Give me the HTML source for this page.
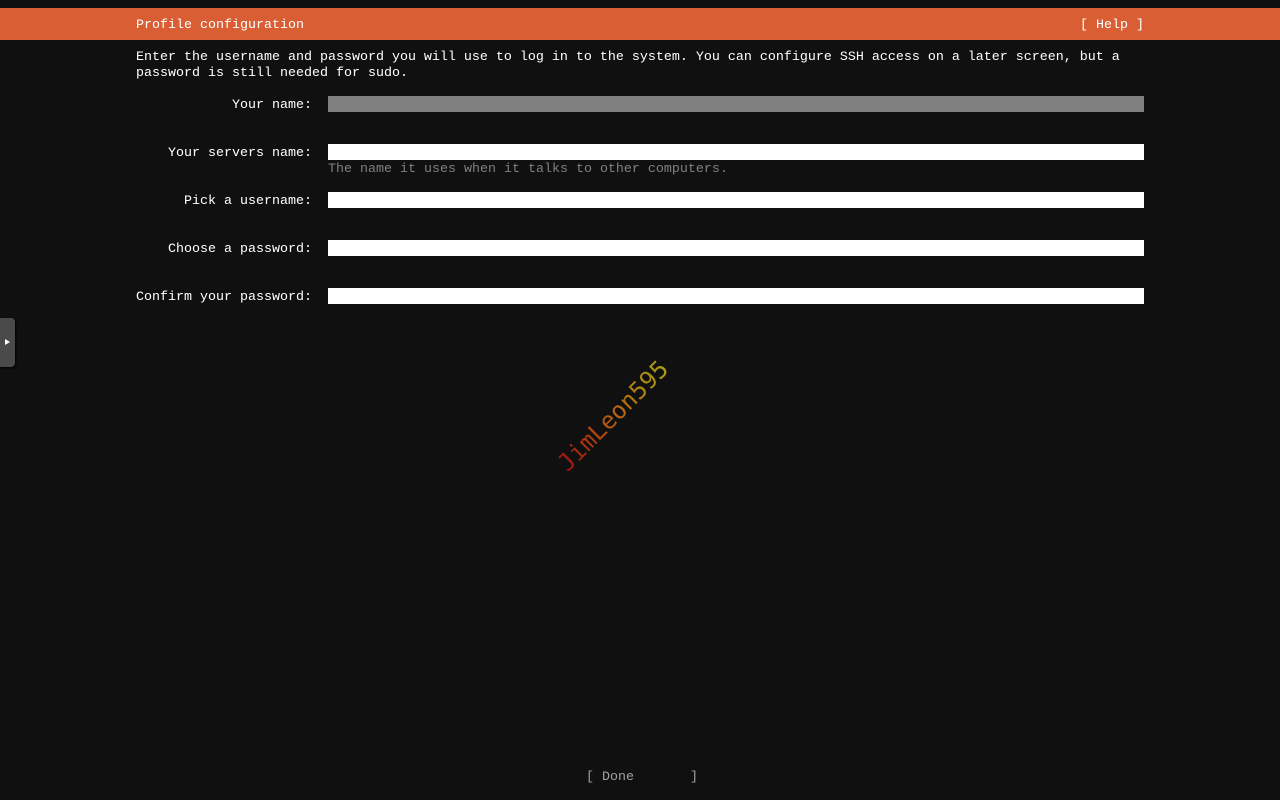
<!DOCTYPE html>
<html><head><style>
body{margin:0;width:1280px;height:800px;background:#101010;overflow:hidden;font-family:"Liberation Mono",monospace;font-size:13.33px;line-height:16px;color:#fff;position:relative}
.t{position:absolute;white-space:pre}
.bar{position:absolute;left:0;top:8px;width:1280px;height:32px;background:#d95e33}
.lab{position:absolute;right:968px;white-space:pre}
.f{position:absolute;left:328px;width:816px;height:16px;background:#fff}
</style></head><body>
<div class="bar"></div>
<div class="t" style="left:136px;top:18px">Profile configuration</div>
<div class="t" style="left:1080px;top:18px">[ Help ]</div>
<div class="t" style="left:136px;top:50px">Enter the username and password you will use to log in to the system. You can configure SSH access on a later screen, but a
password is still needed for sudo.</div>
<div class="lab" style="top:98px">Your name:</div><div class="f" style="top:96px;background:#808080"></div>
<div class="lab" style="top:146px">Your servers name:</div><div class="f" style="top:144px"></div>
<div class="t" style="left:328px;top:162px;color:#808080">The name it uses when it talks to other computers.</div>
<div class="lab" style="top:194px">Pick a username:</div><div class="f" style="top:192px"></div>
<div class="lab" style="top:242px">Choose a password:</div><div class="f" style="top:240px"></div>
<div class="lab" style="top:290px">Confirm your password:</div><div class="f" style="top:288px"></div>
<div style="position:absolute;left:-6px;top:318px;width:21px;height:49px;background:#4a4a4a;border-radius:4px;box-shadow:1px 1px 2px #000"></div>
<div style="position:absolute;left:5px;top:339px;width:0;height:0;border-left:5px solid #fff;border-top:3px solid transparent;border-bottom:3px solid transparent"></div>
<div class="t" style="left:562px;top:454px;font-size:24px;line-height:26px;transform:rotate(-45deg);transform-origin:left center;background:linear-gradient(90deg,#a01010,#b86010,#a8a010);-webkit-background-clip:text;background-clip:text;color:transparent;font-family:'DejaVu Sans Mono',monospace">JimLeon595</div>
<div class="t" style="left:586px;top:770px;color:#a0a0a0">[ Done       ]</div>
</body></html>
